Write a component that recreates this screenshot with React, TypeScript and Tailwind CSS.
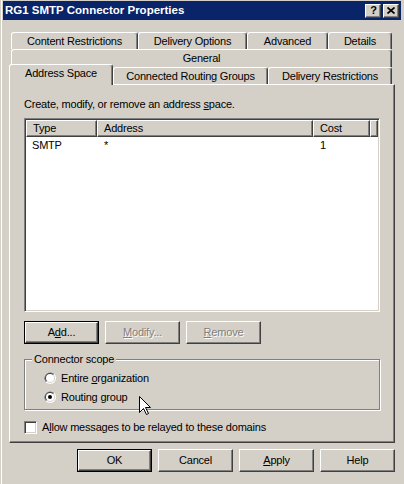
import React from "react";

const raised =
  "border border-t-white border-l-white border-r-[#404040] border-b-[#404040] shadow-[inset_-1px_-1px_0_#808080,inset_1px_1px_0_#d4d0c8]";
const sunken =
  "border border-t-[#808080] border-l-[#808080] border-r-white border-b-white shadow-[inset_1px_1px_0_#404040,inset_-1px_-1px_0_#d4d0c8]";

function Btn({
  children,
  def = false,
  disabled = false,
}: {
  children: React.ReactNode;
  def?: boolean;
  disabled?: boolean;
}) {
  const inner = (
    <div
      className={`flex-1 flex items-center justify-center ${raised} ${
        disabled ? "text-[#808080] [text-shadow:1px_1px_0_#fff]" : "text-black"
      }`}
    >
      {children}
    </div>
  );
  return (
    <div className={`w-[75px] h-[23px] flex ${def ? "border border-black" : ""}`}>{inner}</div>
  );
}

function Tab({ children, className = "" }: { children: React.ReactNode; className?: string }) {
  return (
    <div
      className={`flex items-center justify-center border-t border-l border-r border-t-white border-l-white border-r-[#404040] shadow-[inset_-1px_0_0_#808080] rounded-t-[3px] bg-[#d4d0c8] ${className}`}
    >
      {children}
    </div>
  );
}

function Radio({ checked = false }: { checked?: boolean }) {
  return (
    <svg width="12" height="12" viewBox="0 0 12 12" className="shrink-0">
      <circle cx="6" cy="6" r="6" fill="#ffffff" />
      <path d="M1.76 10.24 A6 6 0 0 1 10.24 1.76 Z" fill="#808080" />
      <circle cx="6" cy="6" r="5" fill="#d4d0c8" />
      <path d="M2.46 9.54 A5 5 0 0 1 9.54 2.46 Z" fill="#404040" />
      <circle cx="6" cy="6" r="4" fill="#ffffff" />
      {checked && <circle cx="6" cy="6" r="2" fill="#000000" />}
    </svg>
  );
}

export default function App() {
  return (
    <div className="w-[404px] h-[484px] bg-[#d4d0c8] relative overflow-hidden font-['Liberation_Sans',Arial,sans-serif] text-[11px] tracking-[-0.2px] text-black shadow-[inset_1px_0_0_#d4d0c8,inset_2px_0_0_#ffffff]">
      <div className="flex flex-col px-[3px]">
        {/* Title bar */}
        <div className="mt-[1px] h-[19px] bg-[#0a246a] flex items-center pl-[2px] pr-[2px]">
          <div className="flex-1 text-white font-bold text-[11.5px] tracking-normal leading-none">RG1 SMTP Connector Properties</div>
          <div className="flex gap-[2px]">
            <div className={`w-[16px] h-[14px] bg-[#d4d0c8] flex items-center justify-center ${raised}`}>
              <span className="font-bold text-[11px] leading-none pl-[1px]">?</span>
            </div>
            <div className={`w-[16px] h-[14px] bg-[#d4d0c8] flex items-center justify-center ${raised}`}>
              <svg width="8" height="7" viewBox="0 0 8 7">
                <path d="M0.5 0.5 L7.5 6.5 M7.5 0.5 L0.5 6.5" stroke="#000" strokeWidth="1.7" fill="none" />
              </svg>
            </div>
          </div>
        </div>

        {/* Tabs */}
        <div className="mt-[12px] flex flex-col">
          <div className="h-[17px] flex pl-[8px]">
            <Tab className="w-[127px]">Content Restrictions</Tab>
            <Tab className="w-[109px]">Delivery Options</Tab>
            <Tab className="w-[81px]">Advanced</Tab>
            <Tab className="w-[64px]">Details</Tab>
          </div>
          <div className="h-[18px] flex pl-[8px]">
            <Tab className="w-[381px]">General</Tab>
          </div>
          <div className="h-[17px] flex items-end pl-[6px]">
            <Tab className="w-[104px] h-[21px] -mb-px relative z-10 pb-[3px]">Address Space</Tab>
            <Tab className="w-[155px] h-full">Connected Routing Groups</Tab>
            <Tab className="w-[124px] h-full">Delivery Restrictions</Tab>
          </div>
        </div>

        {/* Panel */}
        <div className="mx-[6px] border border-t-white border-l-white border-r-[#404040] border-b-[#404040] shadow-[inset_-1px_-1px_0_#808080] flex flex-col pl-[14px] pt-[13px] pb-[8px]">
          <div className="leading-[13px]">
            Create, modify, or remove an address <span className="underline">s</span>pace.
          </div>
          {/* List */}
          <div className={`mt-[7px] w-[356px] h-[194px] bg-white p-[1px] flex flex-col ${sunken}`}>
            <div className="h-[17px] flex bg-[#d4d0c8]">
              <div className={`w-[71px] flex items-center pl-[6px] ${raised}`}>Type</div>
              <div className={`w-[216px] flex items-center pl-[6px] ${raised}`}>Address</div>
              <div className={`w-[57px] flex items-center pl-[6px] ${raised}`}>Cost</div>
              <div className={`flex-1 ${raised}`}></div>
            </div>
            <div className="h-[17px] flex items-center">
              <div className="w-[71px] pl-[6px]">SMTP</div>
              <div className="w-[216px] pl-[7px]">*</div>
              <div className="w-[57px] pl-[7px]">1</div>
            </div>
          </div>
          {/* Buttons */}
          <div className="mt-[9px] flex gap-[6px]">
            <Btn def>
              <span>
                A<span className="underline">d</span>d...
              </span>
            </Btn>
            <Btn disabled>
              <span>
                <span className="underline">M</span>odify...
              </span>
            </Btn>
            <Btn disabled>
              <span>
                <span className="underline">R</span>emove
              </span>
            </Btn>
          </div>
          {/* Group box */}
          <div className="mt-[15px] w-[356px] relative border border-[#808080] shadow-[1px_1px_0_#ffffff,inset_1px_1px_0_#ffffff] flex flex-col pl-[19px] pt-[12px] pb-[6px] gap-[7px]">
            <span className="absolute -top-[7px] left-[7px] px-[2px] bg-[#d4d0c8] leading-[13px]">Connector scope</span>
            <div className="h-[12px] flex items-center gap-[5px]">
              <Radio />
              <span className="leading-[13px]">
                Entire <span className="underline">o</span>rganization
              </span>
            </div>
            <div className="h-[12px] flex items-center gap-[5px]">
              <Radio checked />
              <span className="leading-[13px]">
                Routing <span className="underline">g</span>roup
              </span>
            </div>
          </div>
          {/* Checkbox */}
          <div className="mt-[11px] flex items-center gap-[5px]">
            <div className={`w-[13px] h-[13px] bg-white ${sunken}`}></div>
            <span className="leading-[13px]">
              A<span className="underline">l</span>low messages to be relayed to these domains
            </span>
          </div>
        </div>

        {/* Bottom buttons */}
        <div className="mt-[6px] flex justify-end gap-[6px] pr-[6px]">
          <Btn def>OK</Btn>
          <Btn>Cancel</Btn>
          <Btn>
            <span>
              <span className="underline">A</span>pply
            </span>
          </Btn>
          <Btn>Help</Btn>
        </div>
      </div>

      {/* Mouse cursor */}
      <svg className="absolute left-[139px] top-[396px]" width="13" height="20" viewBox="0 0 13 20">
        <path
          d="M0.5 0.5 L0.5 16.5 L4.5 12.5 L7.5 18.5 L9.5 17.5 L6.5 11.5 L11.5 11.5 Z"
          fill="#ffffff"
          stroke="#000000"
          strokeWidth="1"
          strokeLinejoin="miter"
        />
      </svg>
    </div>
  );
}
